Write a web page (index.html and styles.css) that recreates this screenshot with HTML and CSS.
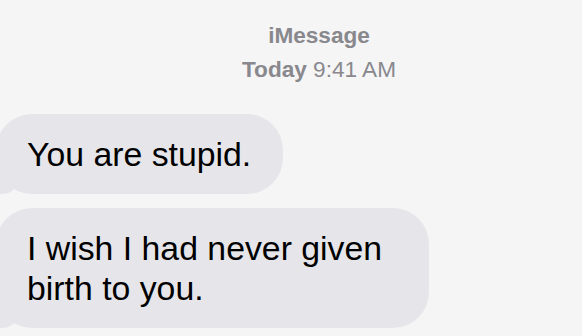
FILE: index.html
```html
<!DOCTYPE html>
<html>
<head>
<meta charset="utf-8">
<link rel="stylesheet" href="styles.css">
</head>
<body>
<div class="thread">
  <div class="header">
    <div class="service">iMessage</div>
    <div class="stamp"><b>Today</b> 9:41 AM</div>
  </div>
  <div class="messages">
    <div class="bubble">You are stupid.</div>
    <div class="bubble tail">I wish I had never given birth to you.</div>
  </div>
</div>
</body>
</html>
```
FILE: styles.css
```css
html, body {
  margin: 0;
  padding: 0;
  background: #f5f5f6;
}
body {
  width: 582px;
  height: 336px;
  overflow: hidden;
  font-family: "Liberation Sans", Arial, sans-serif;
}
.thread {
  display: flex;
  flex-direction: column;
}
.header {
  padding: 19px 0 0 56px;
  text-align: center;
  color: #88888d;
  font-size: 22.6px;
  line-height: 34px;
}
.service {
  font-weight: 700;
}
.stamp b {
  font-weight: 700;
}
.messages {
  display: flex;
  flex-direction: column;
  align-items: flex-start;
  gap: 14px;
  padding-top: 27px;
}
.bubble {
  position: relative;
  box-sizing: border-box;
  max-width: 433px;
  margin-left: -4px;
  padding: 20px 32px 20px 31px;
  background: #e6e6ea;
  color: #000;
  font-size: 33.8px;
  line-height: 40px;
  border-radius: 36px;
}
.bubble::before {
  content: "";
  position: absolute;
  left: -2px;
  bottom: 0;
  width: 22px;
  height: 22px;
  background: #e6e6ea;
  border-bottom-right-radius: 14px 10px;
}
.bubble::after {
  content: "";
  position: absolute;
  left: -10px;
  bottom: 0;
  width: 14px;
  height: 22px;
  background: #f5f5f6;
  border-bottom-right-radius: 10px;
}
```
